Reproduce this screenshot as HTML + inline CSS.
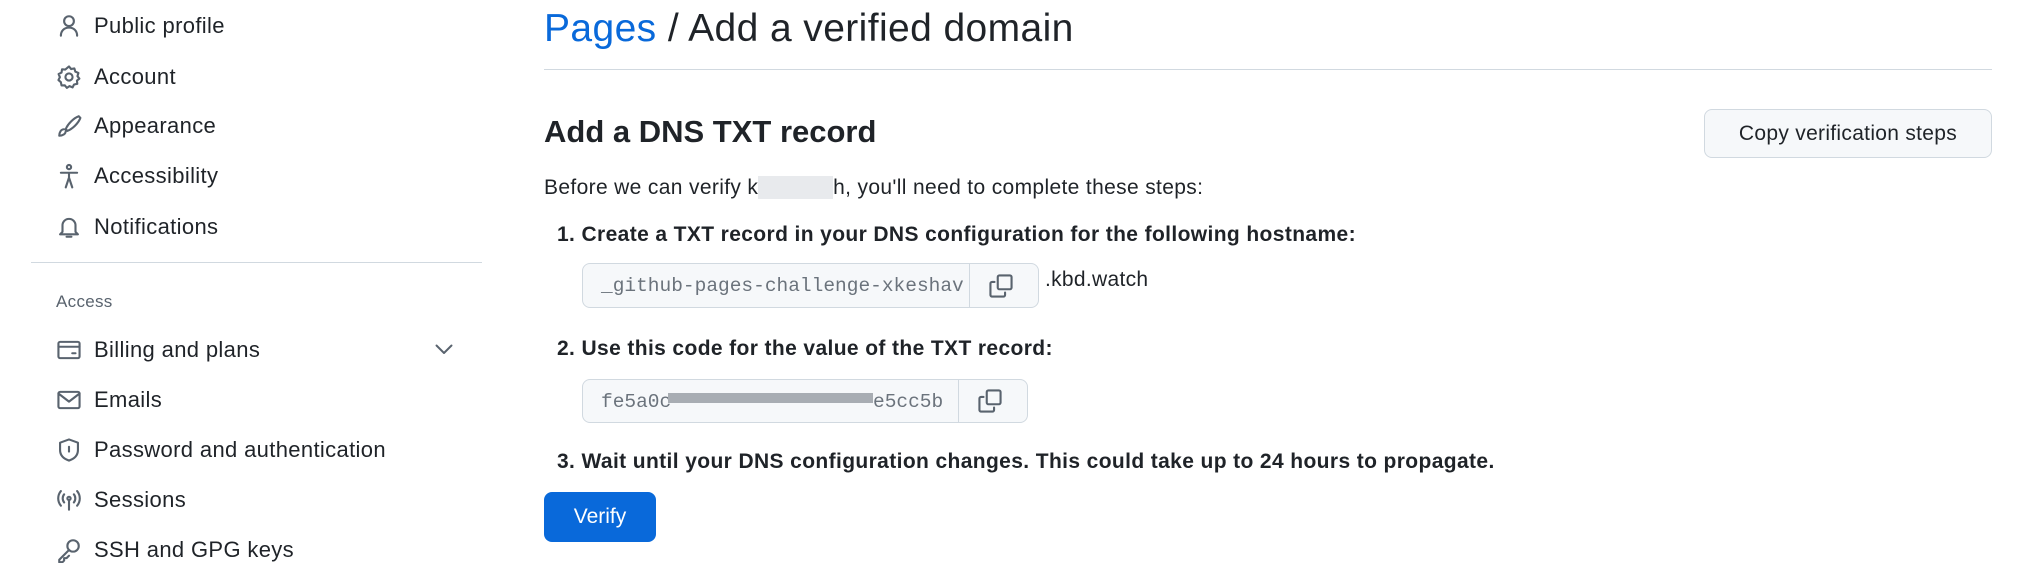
<!DOCTYPE html>
<html><head><meta charset="utf-8"><style>
body{margin:0;width:2042px;height:582px;background:#fff;font-family:"Liberation Sans",sans-serif;color:#1f2328;position:relative;overflow:hidden}
.a{position:absolute;white-space:nowrap}
.nav{font-size:22px;left:94px;line-height:30px;letter-spacing:0.35px}
.ic{position:absolute;left:56px;width:26px;height:26px}
svg{fill:none;stroke:#59636e;stroke-width:1.3;stroke-linecap:round;stroke-linejoin:round}
.box{position:absolute;border:1px solid #d1d9e0;border-radius:8px;background:#f6f8fa;font-family:"Liberation Mono",monospace;font-size:19.5px;color:#6b737c}
.b{font-weight:bold;font-size:21px;letter-spacing:0.38px}
</style></head><body>
<div class="a nav" style="top:11px">Public profile</div>
<svg class="ic" style="top:13px" viewBox="0 0 16 16"><circle cx="8" cy="5" r="3"/><path d="M3 14c0-3 2-5 5-5s5 2 5 5"/></svg>
<div class="a nav" style="top:62px">Account</div>
<svg class="ic" style="top:64px" viewBox="0 0 16 16"><circle cx="8" cy="8" r="2.2"/><path d="M8 1.5l1.3 1.6 2-.4.6 2 1.9.8-.6 2 1.2 1.5-1.5 1.2.2 2-2 .4-.9 1.8-1.9-.8-1.6 1.1-1.3-1.6-2 .1-.4-2L1.5 9.9l.9-1.8-.8-1.9 1.8-.9.3-2 2 .1z"/></svg>
<div class="a nav" style="top:111px">Appearance</div>
<svg class="ic" style="top:113px" viewBox="0 0 16 16"><path d="M14 2c-3 1-7 5-8 8l1 1c3-1 7-5 8-8zM5 10c-2 0-3 2-3 4 2 0 4-1 4-3"/></svg>
<div class="a nav" style="top:161px">Accessibility</div>
<svg class="ic" style="top:163px" viewBox="0 0 16 16"><circle cx="8" cy="2.5" r="1.3"/><path d="M3 6h10M8 6v3M8 9l-2 6M8 9l2 6"/></svg>
<div class="a nav" style="top:212px">Notifications</div>
<svg class="ic" style="top:214px" viewBox="0 0 16 16"><path d="M4 11V7a4 4 0 018 0v4l1.5 1.5h-11zM6.5 14h3"/></svg>
<div class="a" style="left:31px;top:262px;width:451px;height:1px;background:#d1d9e0"></div>
<div class="a" style="left:56px;top:292px;font-size:17px;color:#59636e;letter-spacing:0.3px">Access</div>
<div class="a nav" style="top:335px">Billing and plans</div>
<svg class="ic" style="top:337px" viewBox="0 0 16 16"><rect x="1.5" y="3" width="13" height="10" rx="1"/><path d="M1.5 6h13M10 10h2"/></svg>
<svg class="a" style="left:432px;top:342px;width:24px;height:16px" viewBox="0 0 16 10"><path d="M3 2l5 5 5-5"/></svg>
<div class="a nav" style="top:385px">Emails</div>
<svg class="ic" style="top:387px" viewBox="0 0 16 16"><rect x="1.5" y="3" width="13" height="10" rx="1"/><path d="M1.5 4l6.5 5 6.5-5"/></svg>
<div class="a nav" style="top:435px">Password and authentication</div>
<svg class="ic" style="top:437px" viewBox="0 0 16 16"><path d="M8 1.5l5.5 2v4.5c0 3.5-2.5 5.5-5.5 6.5-3-1-5.5-3-5.5-6.5V3.5z"/><path d="M8 6v3"/></svg>
<div class="a nav" style="top:485px">Sessions</div>
<svg class="ic" style="top:487px" viewBox="0 0 16 16"><circle cx="8" cy="7" r="1"/><path d="M8 8v6M5 4.5a4 4 0 000 5M11 4.5a4 4 0 010 5M3 2.5a7 7 0 000 9M13 2.5a7 7 0 010 9"/></svg>
<div class="a nav" style="top:535px">SSH and GPG keys</div>
<svg class="ic" style="top:537px" viewBox="0 0 16 16"><circle cx="10.5" cy="5.5" r="3.5"/><path d="M8 8l-6 6v1.5h2l1-1v-1.5h1.5l1.5-1.5"/></svg>

<div class="a" style="left:544px;top:6px;font-size:39px;line-height:46px;letter-spacing:0.4px"><span style="color:#0969da">Pages</span> / Add a verified domain</div>
<div class="a" style="left:544px;top:69px;width:1448px;height:1px;background:#d1d9e0"></div>
<div class="a" style="left:544px;top:113px;font-size:31px;font-weight:bold;line-height:38px">Add a DNS TXT record</div>
<div class="a" style="left:1704px;top:109px;width:286px;height:47px;border:1px solid #d1d9e0;border-radius:8px;background:#f6f8fa;font-size:21px;line-height:47px;text-align:center;letter-spacing:0.3px">Copy verification steps</div>
<div class="a" style="left:544px;top:176px;font-size:21px;letter-spacing:0.35px">Before we can verify k<span style="color:transparent;background:#e8eaed">bd.watc</span>h, you'll need to complete these steps:</div>
<div class="a b" style="left:557px;top:223px">1. Create a TXT record in your DNS configuration for the following hostname:</div>
<div class="box" style="left:582px;top:263px;width:455px;height:43px">
<div class="a" style="left:18px;top:11px">_github-pages-challenge-xkeshav</div>
<div class="a" style="left:386px;top:0;width:1px;height:43px;background:#d1d9e0"></div>
<svg class="a" style="left:405px;top:9px;width:26px;height:26px" viewBox="0 0 16 16"><rect x="6" y="1.5" width="8.5" height="8.5" rx="1"/><path d="M4 5.5H2.5a1 1 0 00-1 1v7a1 1 0 001 1h7a1 1 0 001-1V12"/></svg>
</div>
<div class="a" style="left:1045px;top:268px;font-size:21px;letter-spacing:0.3px">.kbd.watch</div>
<div class="a b" style="left:557px;top:337px">2. Use this code for the value of the TXT record:</div>
<div class="box" style="left:582px;top:379px;width:444px;height:42px">
<div class="a" style="left:18px;top:11px">fe5a0c</div>
<div class="a" style="left:85px;top:13px;width:205px;height:10px;background:#a8adb3"></div>
<div class="a" style="left:290px;top:11px">e5cc5b</div>
<div class="a" style="left:375px;top:0;width:1px;height:42px;background:#d1d9e0"></div>
<svg class="a" style="left:394px;top:8px;width:26px;height:26px" viewBox="0 0 16 16"><rect x="6" y="1.5" width="8.5" height="8.5" rx="1"/><path d="M4 5.5H2.5a1 1 0 00-1 1v7a1 1 0 001 1h7a1 1 0 001-1V12"/></svg>
</div>
<div class="a b" style="left:557px;top:450px">3. Wait until your DNS configuration changes. This could take up to 24 hours to propagate.</div>
<div class="a" style="left:544px;top:492px;width:112px;height:50px;border-radius:8px;background:#0969da;color:#fff;font-size:21px;line-height:50px;text-align:center">Verify</div>
</body></html>
